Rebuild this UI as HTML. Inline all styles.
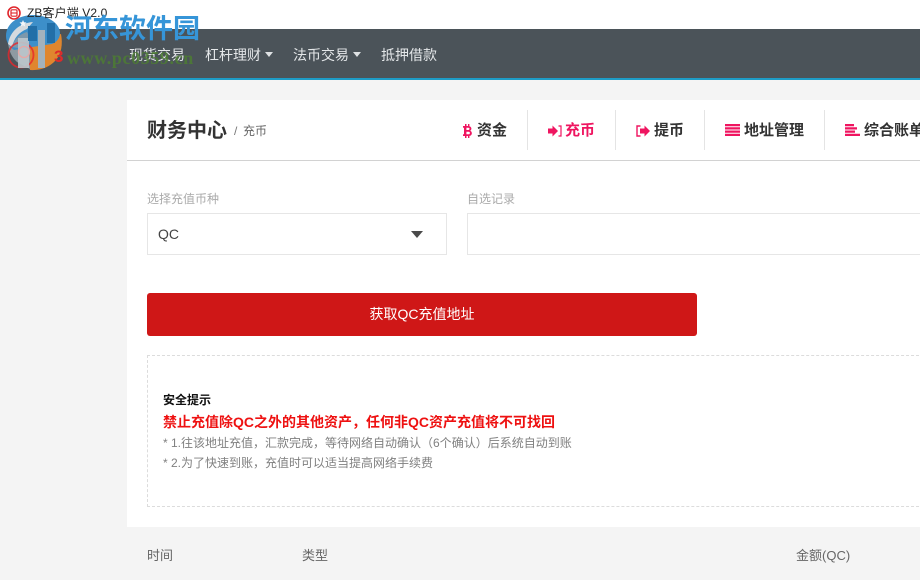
<!DOCTYPE html>
<html lang="zh"><head><meta charset="utf-8"><title>ZB客户端</title>
<style>
html,body{margin:0;padding:0;width:920px;height:580px;overflow:hidden;background:#f4f4f4}
body{position:relative;font-family:"Liberation Sans","Noto Sans CJK SC",sans-serif;color:#333}
.a{position:absolute;white-space:nowrap;line-height:1}
.caret{position:absolute;width:0;height:0;border-left:4.5px solid transparent;border-right:4.5px solid transparent;border-top:5px solid #dfe2e4}
.sep{position:absolute;top:110px;width:1px;height:40px;background:#e4e4e4}
.tab{font-size:15px;font-weight:700;color:#333}
svg{position:absolute;overflow:visible}
</style></head><body>
<div class="a" style="left:0;top:0;width:920px;height:29px;background:#fff"></div>
<div class="a" style="left:0;top:29px;width:920px;height:49px;background:#4b5359"></div>
<div class="a" style="left:0;top:78px;width:920px;height:2px;background:#1d9cc6"></div>

<div class="a" style="left:129px;top:48px;font-size:14px;color:#e4e7e9">现货交易</div>
<div class="a" style="left:205px;top:48px;font-size:14px;color:#e4e7e9">杠杆理财</div>
<div class="caret" style="left:265px;top:52px"></div>
<div class="a" style="left:293px;top:48px;font-size:14px;color:#e4e7e9">法币交易</div>
<div class="caret" style="left:353px;top:52px"></div>
<div class="a" style="left:381px;top:48px;font-size:14px;color:#e4e7e9">抵押借款</div>

<svg style="left:0;top:0" width="70" height="75" viewBox="0 0 70 75">
<path d="M24 42L61 34Q64 50 56 60Q46 71 30 70Z" fill="#e0862e"/>
<path d="M8 42Q9 55 17 62L30 69V44Z" fill="#8e9aa2"/>
<path d="M6 36C6 23 19 15 33 15C47 15 60 23 60 33C60 38 57 42 52 44L32 47L14 50C9 46 6 42 6 36Z" fill="#3d8fc9"/>
<path d="M8 44C10 31 20 23 33 22L27 29C19 32 14 38 12 47Z" fill="#d5dade"/>
<path d="M12 47C14 39 20 34 27 32L30 38L18 48Z" fill="#7d98ab"/>
<circle cx="21" cy="55" r="12.500" fill="none" stroke="#e8262a" stroke-width="1.800" opacity=".8"/>
<path d="M18 38h11v30H18z" fill="#bcc5cb" opacity=".92"/>
<path d="M38 30h7v38h-7z" fill="#a3b2bd"/>
<path d="M28 26h9v15h-9zM47 23h8v20h-8z" fill="#226fa8"/>
<path d="M23 20l1 2.300 2.500.2-1.900 1.600.6 2.400-2.200-1.300-2.200 1.300.6-2.400-1.900-1.600 2.500-.2z" fill="#f4f6f8"/>
<circle cx="24" cy="52" r="5.500" fill="none" stroke="#e7a7a5" stroke-width="1.300"/>
<text x="54" y="62" font-size="17" font-weight="700" fill="#df2a2a" font-family="Liberation Sans">3</text>
</svg>
<svg style="left:7px;top:6px" width="14" height="14" viewBox="0 0 14 14"><circle cx="7" cy="7" r="6" fill="#fff" stroke="#e0262c" stroke-width="1.600"/><rect x="4" y="3.800" width="6" height="6.400" rx="1.200" fill="none" stroke="#e0262c" stroke-width="1.200"/><path d="M4 7h6" stroke="#e0262c" stroke-width="1.100"/></svg>
<div class="a" style="left:27px;top:7px;font-size:12px;color:#222;letter-spacing:.1px">ZB客户端 V2.0</div>
<div class="a" style="left:65px;top:13px;font-size:27px;font-weight:700;color:#3695d8;font-family:'Noto Sans CJK SC',sans-serif">河东软件园</div>
<div class="a" style="left:67px;top:49px;font-size:18px;font-weight:700;color:#4d7d33;font-family:'Liberation Serif',serif;letter-spacing:.6px;opacity:.85">www.pc0359.cn</div>

<div class="a" style="left:127px;top:100px;width:793px;height:427px;background:#fff"></div>
<div class="a" style="left:127px;top:160px;width:793px;height:1px;background:#d2d2d2"></div>
<div class="a" style="left:147px;top:121px;font-size:20px;font-weight:700;color:#333">财务中心</div>
<div class="a" style="left:234px;top:125px;font-size:12px;color:#777">/</div>
<div class="a" style="left:243px;top:125px;font-size:12px;color:#666">充币</div>

<svg style="left:462px;top:124px" width="10" height="14" viewBox="0 0 10 14"><path d="M3 0h1.500v2H6V0h1.400v2.300C9 2.800 9.600 4 9.300 5.200 9.100 6 8.700 6.500 8 6.800 9.400 7.200 10 8.400 9.800 9.700 9.500 11.200 8.400 11.800 7.400 11.900V14H6v-2H4.500v2H3v-2H1v-1.800h1V3.800H1V2h2zM4.400 3.700v2.300h2c.7 0 1.100-.5 1.100-1.200s-.4-1.100-1.100-1.100zM4.400 7.700v2.600h2.300c.8 0 1.200-.6 1.200-1.300S7.500 7.700 6.700 7.700z" fill="#ef1560"/></svg>
<div class="a tab" style="left:477px;top:123px">资金</div>
<div class="sep" style="left:527px"></div>
<svg style="left:548px;top:125px" width="14" height="12" viewBox="0 0 14 12"><path d="M0 3.500h4.500V.5L10 6l-5.500 5.500V8.500H0z" fill="#ef1560"/><path d="M10.500 1h2.500v10h-2.500" fill="none" stroke="#ef1560" stroke-width="1.200"/></svg>
<div class="a tab" style="left:565px;top:123px;color:#ef1560">充币</div>
<div class="sep" style="left:615px"></div>
<svg style="left:636px;top:125px" width="14" height="12" viewBox="0 0 14 12"><path d="M4.500 1H1v10h3.500" fill="none" stroke="#ef1560" stroke-width="1.400"/><path d="M4 3.500h4.500V.5L14 6l-5.500 5.500V8.500H4z" fill="#ef1560"/></svg>
<div class="a tab" style="left:654px;top:123px">提币</div>
<div class="sep" style="left:704px"></div>
<svg style="left:725px;top:124px" width="15" height="12" viewBox="0 0 15 12"><path d="M0 0h15v2.300H0zM0 3.200h15v2.300H0zM0 6.500h15v2.300H0zM0 9.700h15v2.300H0z" fill="#ef1560"/></svg>
<div class="a tab" style="left:744px;top:123px">地址管理</div>
<div class="sep" style="left:824px"></div>
<svg style="left:845px;top:124px" width="15" height="12" viewBox="0 0 15 12"><path d="M0 0h9v2.300H0zM0 3.200h12v2.300H0zM0 6.500h10v2.300H0zM0 9.700h15v2.300H0z" fill="#ef1560"/></svg>
<div class="a tab" style="left:864px;top:123px">综合账单</div>

<div class="a" style="left:147px;top:193px;font-size:12px;color:#aaa">选择充值币种</div>
<div class="a" style="left:467px;top:193px;font-size:12px;color:#aaa">自选记录</div>
<div class="a" style="left:147px;top:213px;width:298px;height:40px;border:1px solid #e6e6e6;background:#fff"></div>
<div class="a" style="left:158px;top:227px;font-size:14px;color:#444">QC</div>
<div class="a" style="left:411px;top:231px;width:0;height:0;border-left:6px solid transparent;border-right:6px solid transparent;border-top:7px solid #4a4a4a"></div>
<div class="a" style="left:467px;top:213px;width:460px;height:40px;border:1px solid #e6e6e6;background:#fff"></div>

<div class="a" style="left:147px;top:293px;width:550px;height:43px;background:#cf1717;border-radius:3px;color:#fff;font-size:14px;line-height:43px;text-align:center">获取QC充值地址</div>

<div class="a" style="left:147px;top:355px;width:800px;height:150px;border:1px dashed #dcdcdc;box-sizing:content-box"></div>
<div class="a" style="left:163px;top:394px;font-size:12px;font-weight:700;color:#111">安全提示</div>
<div class="a" style="left:163px;top:415px;font-size:14px;font-weight:700;color:#ee1111">禁止充值除QC之外的其他资产，任何非QC资产充值将不可找回</div>
<div class="a" style="left:163px;top:437px;font-size:12px;color:#808080">* 1.往该地址充值，汇款完成，等待网络自动确认（6个确认）后系统自动到账</div>
<div class="a" style="left:163px;top:457px;font-size:12px;color:#808080">* 2.为了快速到账，充值时可以适当提高网络手续费</div>

<div class="a" style="left:147px;top:549px;font-size:13px;color:#666">时间</div>
<div class="a" style="left:302px;top:549px;font-size:13px;color:#666">类型</div>
<div class="a" style="left:796px;top:549px;font-size:13px;color:#666">金额(QC)</div>
</body></html>
